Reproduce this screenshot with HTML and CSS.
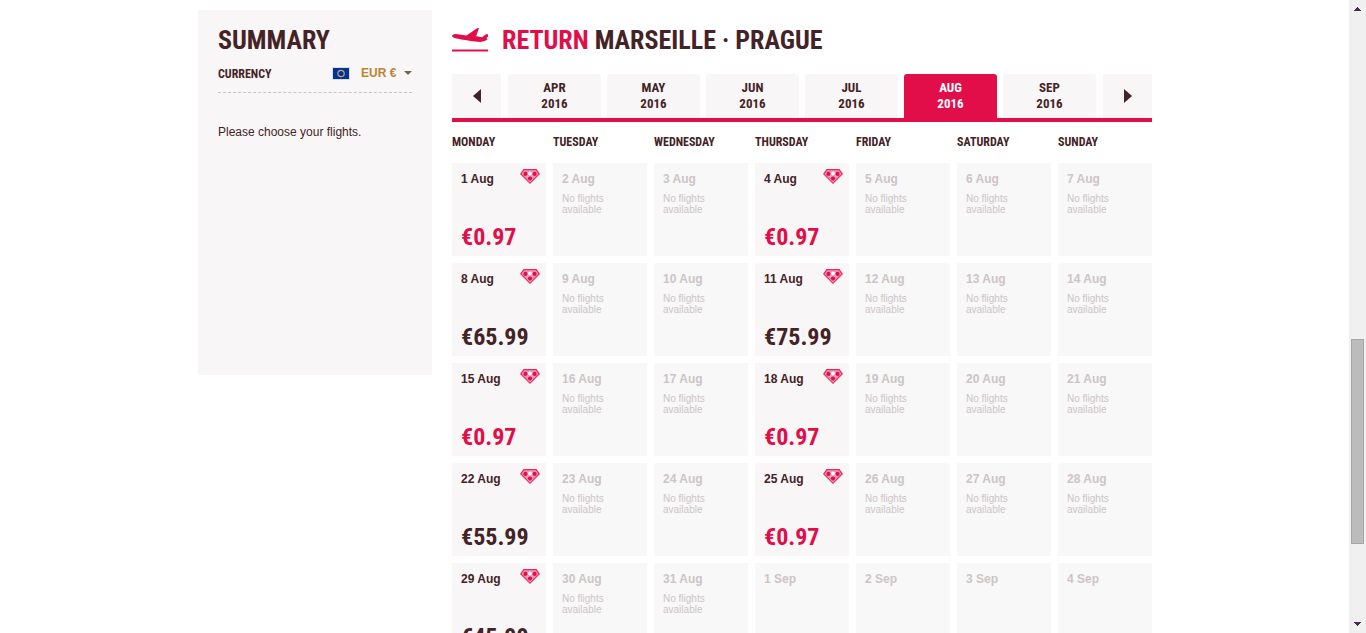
FILE: index.html
```html
<!DOCTYPE html>
<html lang="en">
  <head>
    <meta charset="UTF-8">
    <meta name="viewport" content="width=device-width, initial-scale=1.0">
    <title>Select flights</title>
    <link rel="stylesheet" href="styles.css">
  </head>
  <body>
    <svg class="sprite" aria-hidden="true">
      <symbol id="gem" viewBox="0 0 20 15">
        <path d="M3.5 0h13L20 5 10 15 0 5z" fill="#e62a60"/>
        <path d="M4.2 1.2h11.6L18.4 5 10 13.4 1.6 5z" fill="#f8a4bd"/>
        <path d="M4 2h12M5 2.5L10 7.5 15 2.5M2.5 5.5L5 7.5 7.5 10 10 7.5 12.5 10 17.5 5.5" fill="none" stroke="#ef6a90" stroke-width=".7"/>
        <circle cx="5.4" cy="4.9" r="2.1" fill="#e10e49"/>
        <circle cx="14.6" cy="4.9" r="2.1" fill="#e10e49"/>
        <circle cx="10" cy="9.6" r="2.1" fill="#e10e49"/>
        <circle cx="10" cy="4.5" r="1.9" fill="#fff"/>
      </symbol>
    </svg>

    <div class="page">
      <div class="container">
        <aside class="summary">
          <h2>SUMMARY</h2>
          <div class="currency">
            <label for="currency">CURRENCY</label>
            <svg class="flag" viewBox="0 0 18 13" aria-hidden="true">
              <rect width="18" height="13" fill="#dcdde2"/>
              <rect x="1" y="1" width="16" height="11" fill="#003399"/>
              <circle cx="9" cy="6.5" r="3.2" fill="none" stroke="#c9a95c" stroke-width="1.2"/>
            </svg>
            <select id="currency">
              <option>EUR €</option>
            </select>
            <svg class="caret" viewBox="0 0 8 4" aria-hidden="true"><path d="M0 0h8L4 4z" fill="#6f6653"/></svg>
          </div>
          <p>Please choose your flights.</p>
        </aside>

        <main>
          <h1>
            <svg class="plane" viewBox="0 0 36 24" aria-hidden="true">
              <path d="M0 7.6Q1 6 4 6.1L14.5 7.4 25 .2 27 0 24.2 8.2 30 9.2 34 6.3H36V8.5L34.3 10 35.6 11.2Q33 13.8 28.5 14.1 20 13.5 13 12 5 10.7 1.3 9.4 0 8.7 0 7.6z" fill="#e10e49"/>
              <rect y="21" width="36" height="3" fill="#f08aa6"/>
              <rect y="22" width="36" height="1" fill="#e10e49"/>
            </svg>
            <span><span class="direction">RETURN</span> MARSEILLE · PRAGUE</span>
          </h1>

          <nav class="months">
            <button class="arrow" type="button" aria-label="Previous months">
              <svg viewBox="0 0 8 14"><path d="M8 0v14L0 7z" fill="#442326"/></svg>
            </button>
            <div class="month-list">
              <button type="button">APR<br>2016</button>
              <button type="button">MAY<br>2016</button>
              <button type="button">JUN<br>2016</button>
              <button type="button">JUL<br>2016</button>
              <button class="active" type="button">AUG<br>2016</button>
              <button type="button">SEP<br>2016</button>
            </div>
            <button class="arrow" type="button" aria-label="Next months">
              <svg viewBox="0 0 8 14"><path d="M0 0v14l8-7z" fill="#442326"/></svg>
            </button>
          </nav>

          <table class="calendar">
            <thead>
              <tr>
                <th>MONDAY</th>
                <th>TUESDAY</th>
                <th>WEDNESDAY</th>
                <th>THURSDAY</th>
                <th>FRIDAY</th>
                <th>SATURDAY</th>
                <th>SUNDAY</th>
              </tr>
            </thead>
            <tbody>
              <!-- Days are rendered here -->
            </tbody>
          </table>
        </main>
      </div>
    </div>

    <div class="scrollbar" aria-hidden="true">
      <svg viewBox="0 0 7 4"><path d="M3 0h1v1h1v1h1v1h1v1H0V3h1V2h1V1h1z" fill="#4b2a4b"/></svg>
      <div class="track"><div class="thumb"></div></div>
      <svg viewBox="0 0 7 4"><path d="M0 0h7v1H6v1H5v1H4v1H3V3H2V2H1V1H0z" fill="#4b2a4b"/></svg>
    </div>

    <script>
      const prices = {
        1: '0.97', 4: '0.97', 8: '65.99', 11: '75.99', 15: '0.97',
        18: '0.97', 22: '55.99', 25: '0.97', 29: '45.99'
      };
      const lowest = '0.97';

      function dayCell(n) {
        if (prices[n]) {
          return `
            <td>
              <button class="day" type="button">
                <span class="date">${n} Aug <svg class="gem"><use href="#gem"/></svg></span>
                <span class="price ${prices[n] === lowest ? 'lowest' : ''}">€${prices[n]}</span>
              </button>
            </td>`;
        }
        // Days after the 31st belong to September
        const label = n > 31 ? `${n - 31} Sep` : `${n} Aug`;
        const note = n > 31 ? '' : '<span class="note">No flights available</span>';
        return `<td><div class="day empty"><span class="date">${label}</span>${note}</div></td>`;
      }

      let rows = '';
      for (let week = 0; week < 5; week++) {
        rows += '<tr>';
        for (let d = 1; d <= 7; d++) {
          rows += dayCell(week * 7 + d);
        }
        rows += '</tr>';
      }
      document.querySelector('.calendar tbody').innerHTML = rows;
    </script>
  </body>
</html>
```
FILE: styles.css
```css
* {
  box-sizing: border-box;
}

body {
  margin: 0;
  display: flex;
  height: 100vh;
  overflow: hidden;
  background-color: #fff;
  color: #442326;
  font-family: "Liberation Sans", Arial, sans-serif;
  font-size: 12px;
}

button,
select {
  margin: 0;
  padding: 0;
  border: none;
  background: none;
  color: inherit;
  font: inherit;
  cursor: pointer;
}

svg {
  flex: none;
}

.sprite {
  display: none;
}

h1,
h2,
.currency label,
.months,
.calendar th,
.price {
  font-family: "Roboto Condensed", "Liberation Sans Narrow", "Arial Narrow", "Liberation Sans", sans-serif;
  font-weight: bold;
}

.page {
  flex: 1;
  padding-left: 1px;
  overflow: hidden;
}

.container {
  display: flex;
  align-items: flex-start;
  gap: 20px;
  max-width: 954px;
  margin: 0 auto;
  padding-top: 10px;
}

/* Summary */
.summary {
  flex: none;
  width: 234px;
  min-height: 365px;
  padding: 12px 20px;
  background-color: #f8f6f7;
}

h1,
h2 {
  margin: 0;
  font-size: 26px;
  line-height: 36px;
}

.currency {
  display: flex;
  align-items: center;
  height: 35px;
  padding-bottom: 4px;
  border-bottom: 1px dashed #c9c5c7;
}

.currency label {
  flex: 1;
  padding-top: 2px;
  font-size: 12px;
}

.currency select {
  margin: 0 7px 0 11px;
  appearance: none;
  color: #bd8530;
  font-weight: bold;
}

.flag {
  width: 18px;
  height: 13px;
}

.caret {
  width: 8px;
  height: 4px;
}

.summary p {
  margin: 32px 0 0;
  line-height: 14px;
}

/* Calendar */
main {
  flex: 1;
}

h1 {
  display: flex;
  align-items: center;
  gap: 14px;
  padding-top: 12px;
  margin-bottom: 16px;
}

.plane {
  width: 36px;
  height: 24px;
}

.direction {
  color: #e10e49;
}

.months {
  display: flex;
  gap: 7px;
  height: 48px;
  border-bottom: 4px solid #e10e49;
  font-size: 13px;
  line-height: 16px;
}

.months button {
  background-color: #f8f6f7;
}

.months .arrow {
  display: flex;
  align-items: center;
  justify-content: center;
  width: 49px;
}

.arrow svg {
  width: 8px;
  height: 14px;
}

.month-list {
  flex: 1;
  display: flex;
  gap: 6px;
}

.month-list button {
  flex: 1;
  border-radius: 3px 3px 0 0;
}

.months .active {
  background-color: #e10e49;
  color: #fff;
}

.calendar {
  width: calc(100% + 14px);
  margin: 0 -7px;
  table-layout: fixed;
  border-spacing: 7px;
}

.calendar th {
  padding: 0;
  font-size: 12px;
  line-height: 27px;
  text-align: left;
}

.calendar td {
  padding: 0;
}

.day {
  display: flex;
  flex-direction: column;
  align-items: stretch;
  width: 100%;
  height: 93px;
  padding: 6px 6px 4px 9px;
  background-color: #f8f6f7;
  text-align: left;
}

.date {
  display: flex;
  justify-content: space-between;
  font-weight: bold;
  line-height: 20px;
}

.gem {
  width: 20px;
  height: 15px;
}

.price {
  margin-top: auto;
  font-size: 24px;
  line-height: 30px;
}

.lowest {
  color: #e10e49;
}

.empty {
  background-color: #f8f8f8;
  color: #cdc4c6;
}

.note {
  width: 50px;
  margin-top: 4px;
  font-size: 10px;
  line-height: 11px;
}

/* Scrollbar */
.scrollbar {
  flex: none;
  display: flex;
  flex-direction: column;
  align-items: center;
  justify-content: space-between;
  width: 17px;
  padding: 7px 0;
  background-color: #f0f0f0;
}

.scrollbar svg {
  width: 7px;
  height: 4px;
}

.track {
  flex: 1;
  display: flex;
  flex-direction: column;
  justify-content: flex-end;
  width: 13px;
  padding-bottom: 78px;
}

.thumb {
  height: 38.5%;
  border: 1px solid #a6a6a6;
  background-color: #bcbcbc;
}
```
